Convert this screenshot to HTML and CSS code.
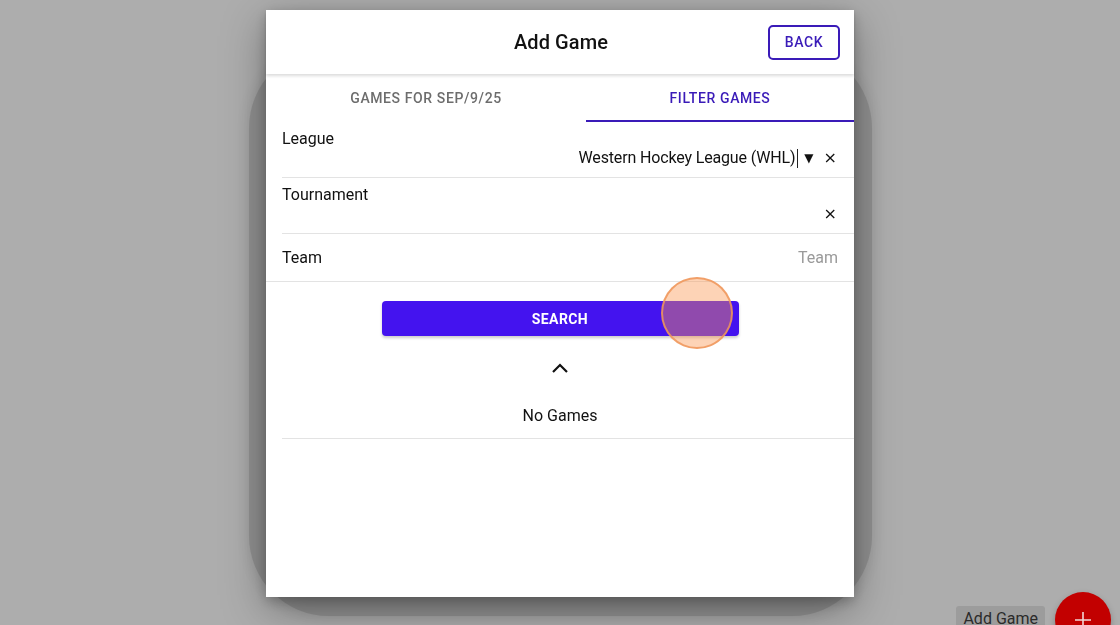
FILE: index.html
```html
<!DOCTYPE html>
<html>
<head>
<meta charset="utf-8">
<link rel="stylesheet" href="styles.css">
</head>
<body>
<div class="page">
  <div class="backcard"></div>
</div>

<div class="modal">
  <header class="modal-head">
    <span></span>
    <h1 class="title">Add Game</h1>
    <button class="back">BACK</button>
  </header>
  <nav class="tabs">
    <div class="tab">GAMES FOR SEP/9/25</div>
    <div class="tab active">FILTER GAMES</div>
  </nav>
  <div class="form">
    <div class="row inset">
      <div class="label">League</div>
      <div class="value"><span class="val-text">Western Hockey League (WHL)</span><span class="cursor"></span><span class="caret">▼</span><span class="clear">×</span></div>
    </div>
    <div class="row inset">
      <div class="label">Tournament</div>
      <div class="value"><span class="clear">×</span></div>
    </div>
    <div class="row team">
      <div class="label">Team</div>
      <div class="placeholder">Team</div>
    </div>
  </div>
  <div class="actions">
    <button class="search">SEARCH<span class="touch"></span></button>
    <svg class="chev" width="18" height="12" viewBox="0 0 18 12"><path d="M2 10 L9 3 L16 10" fill="none" stroke="#111" stroke-width="2.2"/></svg>
    <div class="nogames">No Games</div>
  </div>
</div>

<div class="fab-wrap">
  <span class="fab-label">Add Game</span>
  <span class="fab"><svg width="18" height="18" viewBox="0 0 18 18"><path d="M9 1 V17 M1 9 H17" stroke="#f1d6d6" stroke-width="1.6"/></svg></span>
</div>
</body>
</html>
```

FILE: styles.css
```css
* { box-sizing: border-box; }
html, body { margin: 0; height: 100%; }
body {
  background: #adadad;
  font-family: Roboto, "Noto Sans", "Liberation Sans", sans-serif;
  overflow: hidden;
}
.page {
  height: 625px;
  display: flex;
  justify-content: center;
  padding-top: 48px;
}
.backcard {
  width: 623px;
  height: 568px;
  border-radius: 80px;
  background: #919191;
  box-shadow: 0 0 14px rgba(0,0,0,0.1);
}
.modal {
  position: fixed;
  left: 266px;
  top: 10px;
  width: 588px;
  height: 587px;
  background: #fff;
  box-shadow: 0 12px 40px rgba(0,0,0,0.35), 0 4px 12px rgba(0,0,0,0.2);
  display: flex;
  flex-direction: column;
}
.modal-head {
  height: 64px;
  display: grid;
  grid-template-columns: 1fr auto 1fr;
  align-items: center;
  padding: 0 14px 0 16px;
  box-shadow: 0 2px 3px rgba(0,0,0,0.14);
  position: relative;
  z-index: 1;
}
.title {
  margin: 0;
  font-size: 20px;
  font-weight: 500;
  color: #111;
  letter-spacing: 0.1px;
}
.back {
  justify-self: end;
  width: 72px;
  height: 35px;
  border: 2px solid #3a1bb8;
  border-radius: 5px;
  background: #fff;
  color: #3a1bb8;
  font-family: inherit;
  font-size: 14px;
  font-weight: 500;
  letter-spacing: 0.6px;
}
.tabs {
  display: grid;
  grid-template-columns: 320px 1fr;
  height: 47px;
  margin-top: 1px;
}
.tab {
  display: flex;
  align-items: center;
  justify-content: center;
  font-size: 14px;
  font-weight: 500;
  color: #6d6d6d;
  letter-spacing: 0.6px;
  border-bottom: 2px solid transparent;
}
.tab.active {
  color: #3a1bb8;
  border-bottom-color: #3a1bb8;
}
.form { display: flex; flex-direction: column; }
.row {
  display: flex;
  flex-direction: column;
  font-size: 16px;
  color: #111;
}
.row.inset {
  margin-left: 16px;
  border-bottom: 1px solid #e3e3e3;
  height: 56px;
  padding-top: 8px;
}
.row.inset .label { line-height: 18px; }
.value {
  display: flex;
  justify-content: flex-end;
  align-items: center;
  height: 22px;
  margin-top: -1px;
  padding-right: 17px;
}
.val-text { line-height: 22px; letter-spacing: -0.15px; }
.cursor {
  width: 1px;
  height: 19px;
  background: #222;
  margin-left: 2px;
}
.caret {
  font-size: 12px;
  margin-left: 6px;
  margin-right: 10px;
  font-family: "DejaVu Sans", sans-serif;
}
.clear {
  font-size: 16px;
  line-height: 22px;
  font-weight: 400;
  font-family: "DejaVu Sans", sans-serif;
}
.row.team {
  flex-direction: row;
  justify-content: space-between;
  align-items: center;
  height: 48px;
  padding: 0 16px;
  border-bottom: 1px solid #e3e3e3;
}
.placeholder { color: #9a9a9a; }
.actions {
  display: flex;
  flex-direction: column;
  align-items: center;
  margin-left: 16px;
  border-bottom: 1px solid #e3e3e3;
  padding-top: 19px;
  height: 157px;
}
.search {
  position: relative;
  margin-right: 16px;
  width: 357px;
  height: 35px;
  border: none;
  border-radius: 4px;
  background: #4413ef;
  color: #fff;
  font-family: inherit;
  font-size: 14px;
  font-weight: 700;
  letter-spacing: 0.4px;
  box-shadow: 0 2px 3px rgba(0,0,0,0.2);
}
.touch {
  position: absolute;
  left: 279px;
  top: -24px;
  width: 72px;
  height: 72px;
  border-radius: 50%;
  background: rgba(250, 150, 80, 0.42);
  border: 2px solid rgba(240, 150, 90, 0.85);
}
.chev { margin-top: 26px; margin-right: 16px; }
.nogames {
  margin-top: 32px;
  margin-right: 16px;
  font-size: 16px;
  color: #111;
}
.fab-wrap {
  position: fixed;
  right: 9px;
  top: 592px;
  display: flex;
  align-items: flex-start;
  gap: 10px;
}
.fab-label {
  margin-top: 14px;
  background: #9c9c9c;
  color: #2a2a2a;
  font-size: 16px;
  padding: 3px 7px;
  border-radius: 3px;
}
.fab {
  width: 56px;
  height: 56px;
  border-radius: 50%;
  background: #c20000;
  display: flex;
  align-items: center;
  justify-content: center;
  box-shadow: 0 3px 6px rgba(0,0,0,0.25);
}
```
